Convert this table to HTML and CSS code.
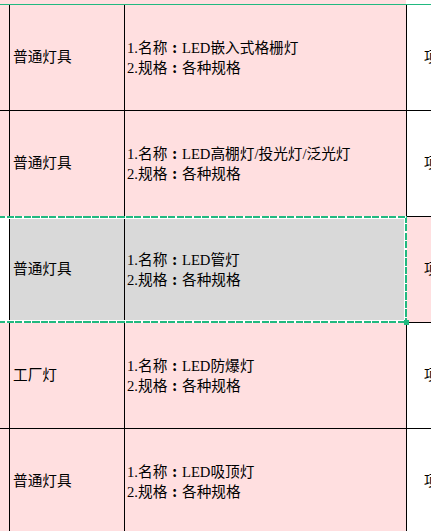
FILE: index.html
```html
<!DOCTYPE html>
<html lang="zh">
<head>
<meta charset="utf-8">
<link rel="stylesheet" href="styles.css">
</head>
<body>
<div class="page">
  <div class="top-strip"></div>
  <div class="freeze-line"></div>
  <div class="sheet">
    <div class="cell c0"></div>
    <div class="cell c1">普通灯具</div>
    <div class="cell c2"><div>1.名称<span class="colon">:</span>LED嵌入式格栅灯</div><div>2.规格<span class="colon">:</span>各种规格</div></div>
    <div class="cell c3">项</div>

    <div class="cell c0"></div>
    <div class="cell c1">普通灯具</div>
    <div class="cell c2"><div>1.名称<span class="colon">:</span>LED高棚灯/投光灯/泛光灯</div><div>2.规格<span class="colon">:</span>各种规格</div></div>
    <div class="cell c3">项</div>

    <div class="cell c0 white"></div>
    <div class="cell c1 sel">普通灯具</div>
    <div class="cell c2 sel"><div>1.名称<span class="colon">:</span>LED管灯</div><div>2.规格<span class="colon">:</span>各种规格</div></div>
    <div class="cell c3 pink">项</div>

    <div class="cell c0"></div>
    <div class="cell c1">工厂灯</div>
    <div class="cell c2"><div>1.名称<span class="colon">:</span>LED防爆灯</div><div>2.规格<span class="colon">:</span>各种规格</div></div>
    <div class="cell c3">项</div>

    <div class="cell c0"></div>
    <div class="cell c1">普通灯具</div>
    <div class="cell c2"><div>1.名称<span class="colon">:</span>LED吸顶灯</div><div>2.规格<span class="colon">:</span>各种规格</div></div>
    <div class="cell c3">项</div>
  </div>
  <div class="marquee"></div>
  <div class="handle"></div>
</div>
</body>
</html>
```

FILE: styles.css
```css
html, body {
  margin: 0;
  padding: 0;
  background: #fff;
  overflow: hidden;
}

.page {
  position: relative;
  width: 431px;
  height: 531px;
  overflow: hidden;
  font-family: "Liberation Serif", "Noto Sans CJK SC", serif;
  font-size: 14.67px;
  color: #000;
}

.top-strip {
  height: 4px;
  background: linear-gradient(90deg, #ffdfe0 0 406px, #fff 406px);
}

.freeze-line {
  height: 1px;
  background: #21b980;
}

.sheet {
  display: grid;
  grid-template-columns: 9px 114px 281px 1fr;
  grid-auto-rows: 105px;
  gap: 1px;
  background: #000;
}

.cell {
  display: flex;
  flex-direction: column;
  justify-content: center;
  background: #ffdfe0;
  line-height: 17.3px;
  white-space: nowrap;
  overflow: hidden;
}

.colon {
  display: inline-block;
  width: 1em;
  text-align: center;
  font-family: "Noto Sans CJK SC", sans-serif;
  font-weight: 700;
}

.c1 {
  padding-left: 3px;
}

.c2 {
  padding-left: 2px;
}

.c3 {
  background: #fff;
  padding-left: 17px;
}

.white {
  background: #fff;
}

.pink {
  background: #ffdfe0;
}

.sel {
  background: #d9d9d9;
}

.marquee {
  position: absolute;
  left: -10px;
  top: 216px;
  width: 413px;
  height: 103px;
  border: 2px solid transparent;
  background:
    repeating-linear-gradient(90deg, #21b980 0 7px, #fff 7px 8.5px) top left / 100% 2px no-repeat,
    repeating-linear-gradient(90deg, #21b980 0 7px, #fff 7px 8.5px) bottom left / 100% 2px no-repeat,
    repeating-linear-gradient(180deg, #21b980 0 7px, #fff 7px 8.5px) top right / 2px 100% no-repeat;
  background-origin: border-box;
  background-clip: border-box;
  box-shadow: inset 0 0 0 1px #fff;
}

.handle {
  position: absolute;
  left: 404px;
  top: 320px;
  width: 5px;
  height: 5px;
  background: #21b980;
}
```
